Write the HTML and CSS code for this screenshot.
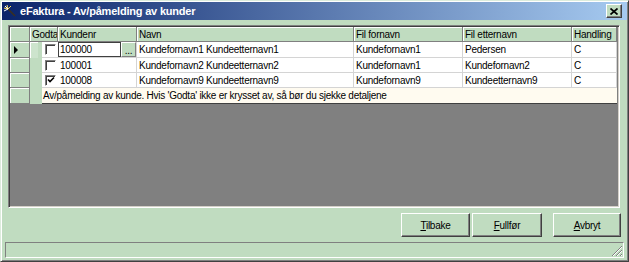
FILE: index.html
```html
<!DOCTYPE html>
<html lang="no">
<head>
    <meta charset="UTF-8">
    <title>eFaktura - Av/påmelding av kunder</title>
    <link rel="stylesheet" href="styles.css">
</head>
<body>

    <div class="window">

        <div class="titlebar">
            <svg class="app-icon" width="12" height="12" viewBox="0 0 12 12">
                <line x1="4" y1="4" x2="11" y2="11" stroke="#3a3020" stroke-width="1.6"/>
                <line x1="4" y1="4" x2="0" y2="3" stroke="#ffe060" stroke-width="1"/>
                <line x1="4" y1="4" x2="3" y2="0" stroke="#ffe060" stroke-width="1"/>
                <line x1="4" y1="4" x2="1" y2="1" stroke="#ffffff" stroke-width="1"/>
                <line x1="4" y1="4" x2="0" y2="6" stroke="#ffffff" stroke-width="1"/>
                <line x1="4" y1="4" x2="7" y2="1" stroke="#ffe060" stroke-width="1"/>
            </svg>
            <span class="title">eFaktura - Av/påmelding av kunder</span>
            <span class="close">
                <svg width="8" height="7" viewBox="0 0 8 7">
                    <path d="M0.5 0.5 L7.5 6.5 M7.5 0.5 L0.5 6.5" stroke="#000" stroke-width="1.7"/>
                </svg>
            </span>
        </div>

        <div class="content">
            <div class="grid">
                <table class="rows">
                    <colgroup>
                        <col style="width: 20px">
                        <col style="width: 12px">
                        <col style="width: 16px">
                        <col style="width: 79px">
                        <col style="width: 217px">
                        <col style="width: 109px">
                        <col style="width: 109px">
                        <col style="width: 45px">
                    </colgroup>
                    <tr class="head">
                        <th class="rh"></th>
                        <th colspan="2">Godta</th>
                        <th>Kundenr</th>
                        <th>Navn</th>
                        <th>Fil fornavn</th>
                        <th>Fil etternavn</th>
                        <th>Handling</th>
                    </tr>
                    <tr class="first">
                        <th class="rh"><span class="arrow"></span></th>
                        <td class="indent" rowspan="4"><span class="indent-top"></span></td>
                        <td class="chk"><span class="box"></span></td>
                        <td class="edit">
                            <div class="editbox">
                                <span class="edit-text">100000</span>
                                <span class="dots">...</span>
                            </div>
                        </td>
                        <td>Kundefornavn1 Kundeetternavn1</td>
                        <td>Kundefornavn1</td>
                        <td>Pedersen</td>
                        <td>C</td>
                    </tr>
                    <tr>
                        <th class="rh"></th>
                        <td class="chk"><span class="box"></span></td>
                        <td>100001</td>
                        <td>Kundefornavn2 Kundeetternavn2</td>
                        <td>Kundefornavn1</td>
                        <td>Kundefornavn2</td>
                        <td>C</td>
                    </tr>
                    <tr>
                        <th class="rh"></th>
                        <td class="chk">
                            <span class="box">
                                <svg width="8" height="8" viewBox="0 0 8 8">
                                    <path d="M1 3.5 L3 5.5 L7 1.5" fill="none" stroke="#000" stroke-width="1.6"/>
                                </svg>
                            </span>
                        </td>
                        <td>100008</td>
                        <td>Kundefornavn9 Kundeetternavn9</td>
                        <td>Kundefornavn9</td>
                        <td>Kundeetternavn9</td>
                        <td>C</td>
                    </tr>
                    <tr class="note">
                        <th class="rh"></th>
                        <td colspan="6">Av/påmelding av kunde. Hvis 'Godta' ikke er krysset av, så bør du sjekke detaljene</td>
                    </tr>
                </table>
            </div>

            <div class="buttons">
                <button class="btn btn-back"><u>T</u>ilbake</button>
                <button class="btn btn-finish"><u>F</u>ullfør</button>
                <button class="btn btn-cancel"><u>A</u>vbryt</button>
            </div>
        </div>

        <div class="statusbar">
            <svg class="grip" width="12" height="12" viewBox="0 0 12 12">
                <path d="M11 1 L1 11 M11 5 L5 11 M11 9 L9 11" stroke="#808080" stroke-width="1"/>
                <path d="M11 2 L2 11 M11 6 L6 11 M11 10 L10 11" stroke="#ffffff" stroke-width="1"/>
            </svg>
        </div>

    </div>

</body>
</html>
```

FILE: styles.css
```css
* {
    box-sizing: border-box;
}
body {
    margin: 0;
    font-family: "Liberation Sans", Arial, sans-serif;
    font-size: 10px;
    letter-spacing: -0.25px;
    color: #000;
    background-color: #c0dcc0;
}
.window {
    width: 629px;
    height: 262px;
    display: flex;
    flex-direction: column;
    padding: 1px;
    background-color: #c0dcc0;
    border: 1px solid;
    border-color: #dcecdc #404040 #404040 #dcecdc;
    box-shadow: inset 1px 1px 0 #fff, inset -1px -1px 0 #808080;
}

/* title bar */
.titlebar {
    height: 18px;
    display: flex;
    align-items: center;
    padding: 0 5px 0 2px;
    background: linear-gradient(to right, #0a246a, #a6caf0);
    color: white;
}
.app-icon {
    margin-right: 4px;
}
.title {
    flex: 1;
    font-weight: bold;
    font-size: 11px;
    letter-spacing: -0.2px;
}
.close {
    width: 16px;
    height: 14px;
    display: flex;
    justify-content: center;
    align-items: center;
    background-color: #c0dcc0;
    border: 1px solid;
    border-color: #fff #404040 #404040 #fff;
    box-shadow: inset -1px -1px 0 #808080;
}

/* grid */
.content {
    padding: 5px 7px 0 6px;
}
.grid {
    height: 183px;
    padding: 1px;
    background-color: #808080;
    border: 1px solid;
    border-color: #808080 #fff #fff #808080;
    box-shadow: inset 1px 1px 0 #404040, inset -1px -1px 0 #d4d0c8;
    overflow: hidden;
}
.rows {
    width: 607px;
    table-layout: fixed;
    border-collapse: separate;
    border-spacing: 0;
}
.rows th,
.rows td {
    padding: 0 2px;
    white-space: nowrap;
    overflow: hidden;
    text-align: left;
    font-weight: normal;
    line-height: 13px;
}
.rows th {
    height: 15px;
    background-color: #c0dcc0;
    border-right: 1px solid #808080;
    border-bottom: 1px solid #808080;
    box-shadow: inset 1px 1px 0 #fff;
}
.rows td {
    height: 15px;
    background-color: white;
    border-right: 1px solid #d4d4d4;
    border-bottom: 1px solid #d4d4d4;
}
.rows tr.first td,
.rows tr.first th {
    height: 16px;
}
.rows th.rh {
    padding: 0 0 0 4px;
}
.arrow {
    display: block;
    width: 0;
    height: 0;
    border-left: 4px solid #000;
    border-top: 4px solid transparent;
    border-bottom: 4px solid transparent;
}
.rows td.indent {
    padding: 0;
    vertical-align: top;
    background-color: #c0dcc0;
    border-right: none;
    border-bottom: none;
}
.indent-top {
    display: block;
    width: 8px;
    height: 16px;
    border-top: 1px solid #fff;
    border-left: 1px solid #fff;
    background-color: #cde4cd;
}
.rows td.chk {
    padding: 0 0 0 3px;
    border-right: none;
}
.box {
    display: flex;
    justify-content: center;
    align-items: center;
    width: 11px;
    height: 11px;
    background-color: white;
    border: 1px solid;
    border-color: #808080 #fff #fff #808080;
    box-shadow: inset 1px 1px 0 #404040;
}
.rows td.edit {
    padding: 0;
}
.editbox {
    display: flex;
    height: 15px;
}
.edit-text {
    flex: 1;
    padding-left: 1px;
    border: 1px solid #404040;
    line-height: 13px;
}
.dots {
    width: 15px;
    background-color: #c0dcc0;
    border: 1px solid;
    border-color: #fff #808080 #808080 #fff;
    text-align: center;
    font-size: 10px;
    line-height: 15px;
}
.rows tr.note td {
    height: 16px;
    background-color: #fffbf0;
    border-right: none;
    border-bottom: 1px solid #404040;
    padding-left: 1px;
}
.rows tr.note th {
    height: 16px;
}

/* buttons */
.buttons {
    display: flex;
    justify-content: flex-end;
    margin: 5px -1px 0 0;
}
.btn {
    height: 24px;
    padding: 0;
    font-family: "Liberation Sans", Arial, sans-serif;
    font-size: 10px;
    letter-spacing: -0.25px;
    color: black;
    background-color: #c0dcc0;
    border: 1px solid;
    border-color: #fff #404040 #404040 #fff;
    box-shadow: inset -1px -1px 0 #808080;
}
.btn-back {
    width: 69px;
    margin-right: 2px;
}
.btn-finish {
    width: 70px;
    margin-right: 11px;
}
.btn-cancel {
    width: 68px;
}

/* status bar */
.statusbar {
    height: 16px;
    margin: 5px 3px 0 3px;
    display: flex;
    justify-content: flex-end;
    align-items: flex-end;
    border: 1px solid;
    border-color: #808080 #fff #fff #808080;
}
.grip {
    display: block;
}
```
